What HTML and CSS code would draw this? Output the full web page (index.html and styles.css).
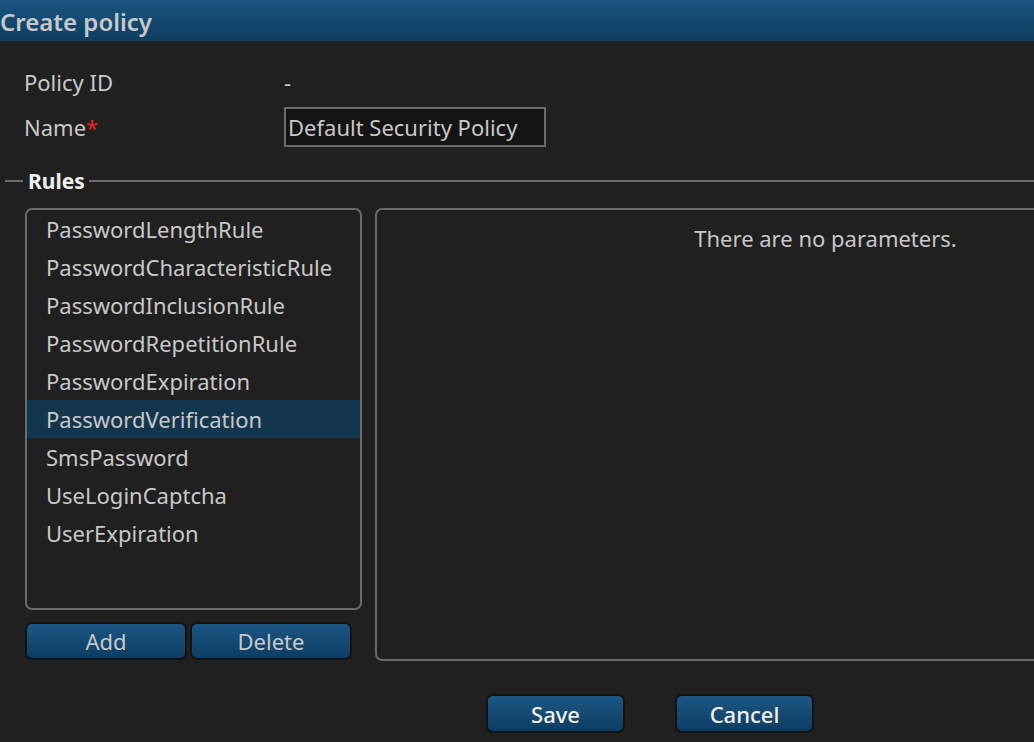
FILE: index.html
```html
<!DOCTYPE html>
<html>
<head>
<meta charset="utf-8">
<link rel="stylesheet" href="styles.css">
</head>
<body>
<div class="dialog">
  <div class="titlebar">Create policy</div>
  <div class="form">
    <div class="row">
      <div class="label">Policy ID</div>
      <div class="value">-</div>
    </div>
    <div class="row">
      <div class="label">Name<span class="req">*</span></div>
      <div class="value"><div class="input">Default Security Policy</div></div>
    </div>
  </div>
  <div class="rules">
    <div class="legend"><span class="legend-text">Rules</span></div>
    <div class="rules-body">
      <div class="left">
        <ul class="list">
          <li>PasswordLengthRule</li>
          <li>PasswordCharacteristicRule</li>
          <li>PasswordInclusionRule</li>
          <li>PasswordRepetitionRule</li>
          <li>PasswordExpiration</li>
          <li class="selected">PasswordVerification</li>
          <li>SmsPassword</li>
          <li>UseLoginCaptcha</li>
          <li>UserExpiration</li>
        </ul>
        <div class="list-buttons">
          <button class="btn small">Add</button>
          <button class="btn small">Delete</button>
        </div>
      </div>
      <div class="params">There are no parameters.</div>
    </div>
  </div>
  <div class="footer">
    <button class="btn big">Save</button>
    <button class="btn big">Cancel</button>
  </div>
</div>
</body>
</html>
```
FILE: styles.css
```css
html, body {
  margin: 0;
  padding: 0;
  background: #202020;
  overflow: hidden;
}
body {
  font-family: "Noto Sans", "Open Sans", sans-serif;
  color: #d0d0d0;
  width: 1034px;
  height: 742px;
}
.titlebar {
  height: 41px;
  box-sizing: border-box;
  background: linear-gradient(#1a5580, #0f3d62);
  color: #c8c8c8;
  font-size: 24px;
  font-weight: 600;
  line-height: 43px;
  padding-left: 0;
  white-space: nowrap;
}
.form {
  padding: 21px 0 0 24px;
}
.row {
  display: flex;
  align-items: center;
  height: 40px;
  font-size: 22px;
  color: #c8c8c8;
}
.row + .row { margin-top: 5px; }
.label {
  width: 260px;
}
.req { color: #ee2020; }
.value { color: #c8c8c8; }
.input {
  box-sizing: border-box;
  width: 262px;
  height: 40px;
  border: 2px solid #6a6a6a;
  background: #141414;
  padding-left: 2px;
  line-height: 36px;
  font-size: 22px;
  white-space: nowrap;
}
.rules {
  margin-top: 23px;
}
.legend {
  height: 22px;
  display: flex;
  align-items: center;
  padding-left: 5px;
}
.legend::before {
  content: "";
  flex: 1;
  order: 2;
  height: 2px;
  background: #6a6a6a;
  margin-left: 4px;
}
.legend::after {
  content: "";
  order: 0;
  width: 18px;
  height: 2px;
  background: #6a6a6a;
  margin-right: 5px;
}
.legend-text {
  order: 1;
  font-size: 21px;
  font-weight: 700;
  color: #f0f0f0;
}
.rules-body {
  display: flex;
  margin-top: 16px;
  padding-left: 25px;
  gap: 13px;
}
.left {
  width: 337px;
  flex: none;
}
.list {
  list-style: none;
  margin: 0;
  padding: 0;
  box-sizing: border-box;
  height: 402px;
  border: 2px solid #6a6a6a;
  border-radius: 7px;
  font-size: 22px;
  color: #c8c8c8;
}
.list li {
  height: 38px;
  line-height: 38px;
  padding-left: 19px;
  white-space: nowrap;
}
.list li.selected {
  background: #13364f;
}
.list-buttons {
  display: flex;
  gap: 3px;
  margin-top: 12px;
}
.btn {
  box-sizing: border-box;
  font-family: "Noto Sans", "Open Sans", sans-serif;
  border: 2px solid #121212;
  border-radius: 7px;
  background: linear-gradient(#1c5784, #0d3d63);
  color: #c8c8c8;
  font-size: 22px;
  padding: 0;
  cursor: pointer;
}
.btn.small {
  width: 162px;
  height: 38px;
  line-height: 32px;
}
.params {
  flex: 1;
  box-sizing: border-box;
  height: 453px;
  border: 2px solid #6a6a6a;
  border-right: none;
  border-radius: 7px 0 0 7px;
  text-align: center;
  padding-top: 13px;
  padding-left: 240px;
  font-size: 22px;
  color: #c8c8c8;
}
.footer {
  display: flex;
  justify-content: center;
  gap: 50px;
  margin-top: 33px;
  padding-left: 266px;
}
.btn.big {
  width: 139px;
  height: 39px;
  color: #f0f0f0;
  font-weight: 500;
  font-size: 22px;
}
```
